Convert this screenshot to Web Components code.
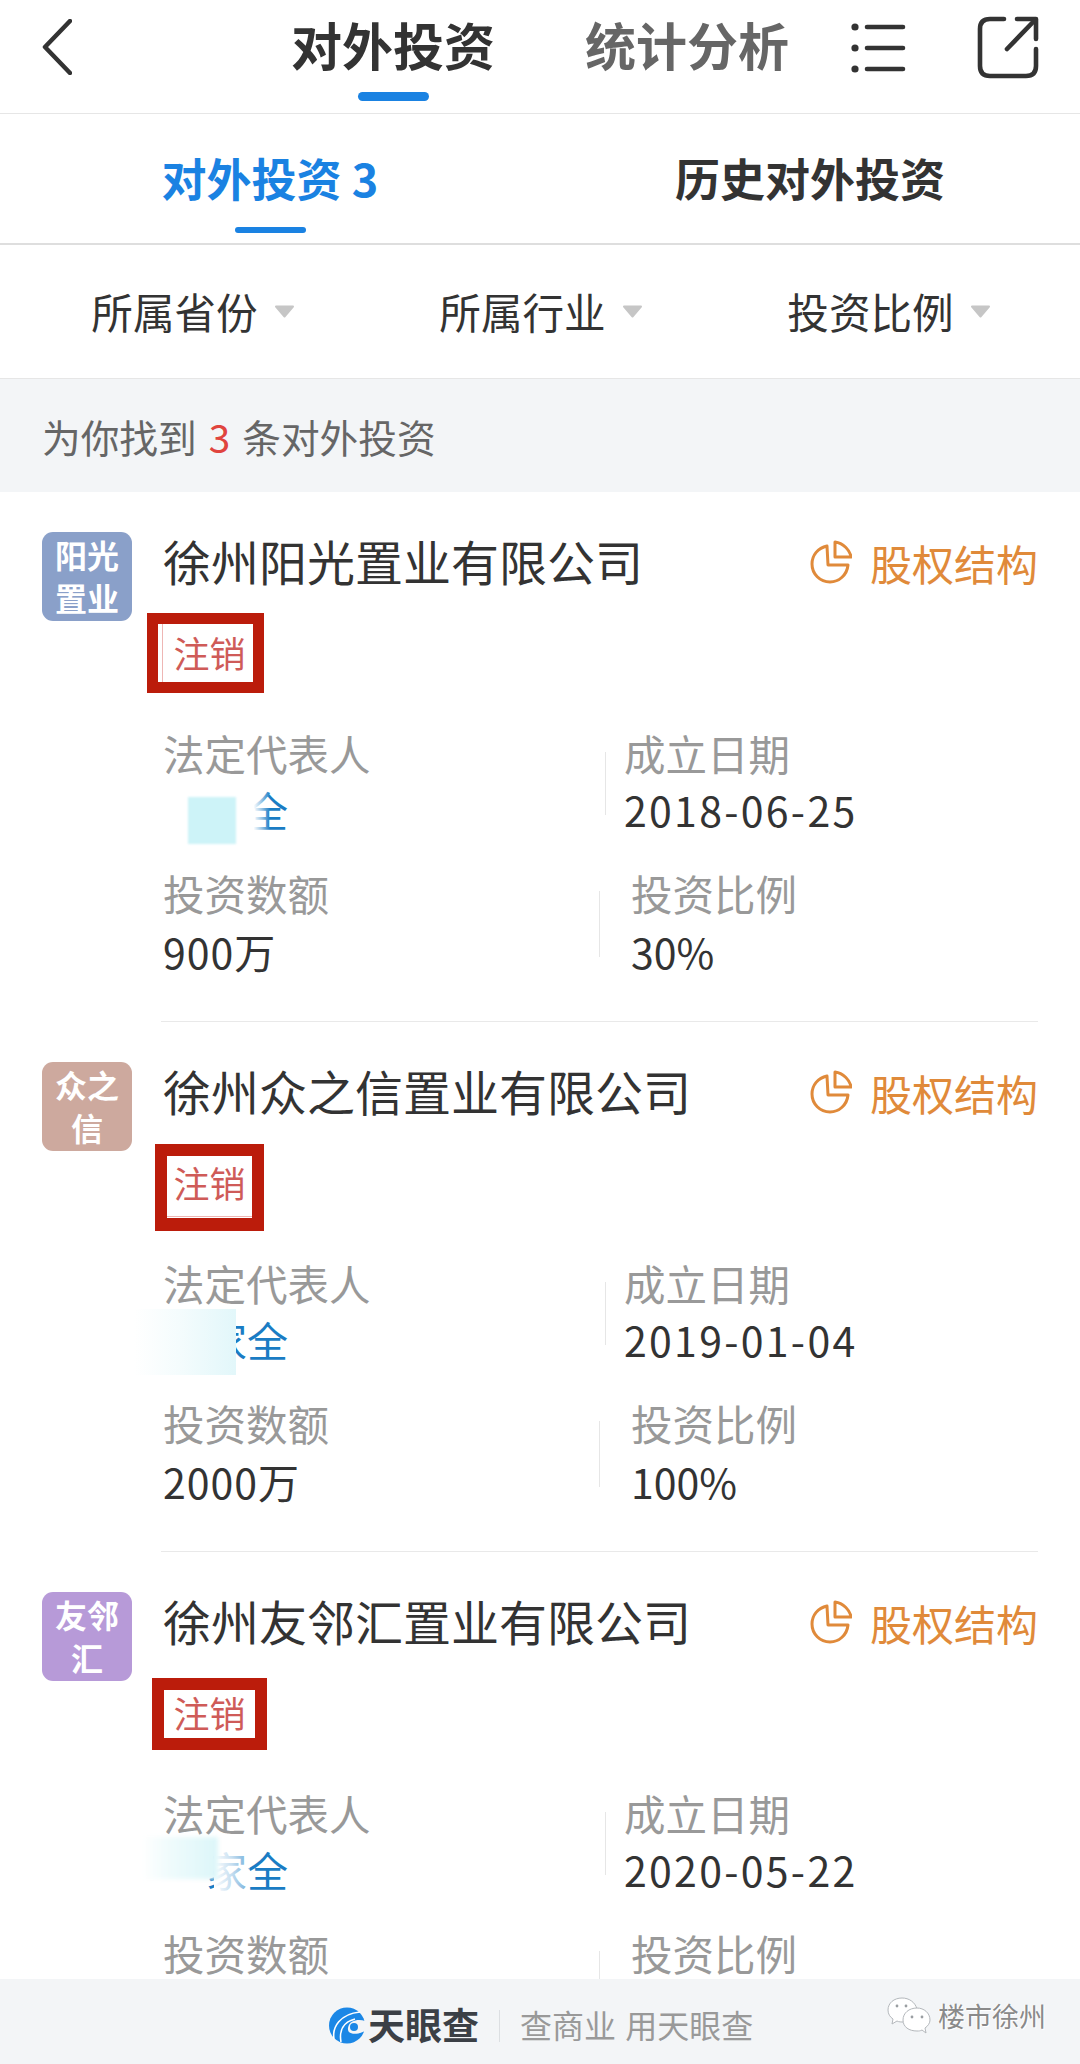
<!DOCTYPE html>
<html lang="zh">
<head>
<meta charset="utf-8">
<title>对外投资</title>
<style>
    html, body {
        margin: 0;
        padding: 0;
        background: #fff;
        font-family: "Noto Sans CJK SC", "Noto Sans", sans-serif;
        color: #333;
    }
    #page {
        width: 1080px;
        height: 2064px;
        overflow: hidden;
        display: flex;
        flex-direction: column;
    }
    #list {
        flex: 1;
        min-height: 0;
        overflow: hidden;
    }
</style>
</head>
<body>
<div id="page">
    <top-header></top-header>
    <sub-tabs></sub-tabs>
    <filter-bar></filter-bar>
    <result-count count="3"></result-count>
    <div id="list">
        <invest-card logo="阳光置业" color="#8aa0c9" name="徐州阳光置业有限公司" date="2018-06-25" amount="900万" ratio="30%" frame="-15,-8,117,80,11,11">
            <rep-name slot="rep" variant="a">全</rep-name>
        </invest-card>
        <invest-card logo="众之信" color="#cda99e" name="徐州众之信置业有限公司" date="2019-01-04" amount="2000万" ratio="100%" frame="-7,-7,109,87,12,13">
            <rep-name slot="rep" variant="b">家全</rep-name>
        </invest-card>
        <invest-card logo="友邻汇" color="#b79ad8" name="徐州友邻汇置业有限公司" date="2020-05-22" ratio="" frame="-10,-3,115,72,12,12">
            <rep-name slot="rep" variant="c">家全</rep-name>
        </invest-card>
    </div>
    <page-footer></page-footer>
</div>

<script>
class TopHeader extends HTMLElement {
    constructor() {
        super();
        this.shadowDOM = this.attachShadow({ mode: 'open' });
    }

    connectedCallback() {
        this.shadowDOM.innerHTML = `
        <style>
            :host {
                display: flex;
                height: 113px;
                border-bottom: 1px solid #e6e6e6;
                padding-left: 42px;
                background: #fff;
            }
            svg { display: block; flex: none; }
            .back { margin-top: 19px; }
            .tab {
                width: 200px;
                padding-top: 14px;
                display: flex;
                flex-direction: column;
                align-items: center;
                font-size: 51px;
                line-height: 60px;
                font-weight: 700;
                white-space: nowrap;
            }
            .tab.first { margin-left: 221px; color: #333; }
            .tab.second { margin-left: 94px; color: #666; }
            .tab i {
                width: 71px;
                height: 9px;
                margin-top: 18px;
                border-radius: 5px;
                background: #1a82e2;
            }
            .menu { margin-left: 63px; margin-top: 20px; }
            .share { margin-left: 71px; margin-top: 13px; }
        </style>
        <svg class="back" width="30" height="56" viewBox="0 0 30 56" fill="none">
            <path d="M28 2 L3 28 L28 54" stroke="#333" stroke-width="4.5" stroke-linecap="round" stroke-linejoin="round"/>
        </svg>
        <div class="tab first">对外投资<i></i></div>
        <div class="tab second">统计分析</div>
        <svg class="menu" width="56" height="56" viewBox="0 0 56 56" fill="none" stroke="#333">
            <circle cx="5" cy="7" r="3.6" fill="#333" stroke="none"/>
            <circle cx="5" cy="28" r="3.6" fill="#333" stroke="none"/>
            <circle cx="5" cy="49" r="3.6" fill="#333" stroke="none"/>
            <path d="M17 7H53M17 28H53M17 49H53" stroke-width="4.6" stroke-linecap="round"/>
        </svg>
        <svg class="share" width="64" height="68" viewBox="0 0 64 68" fill="none" stroke="#333" stroke-width="4.6" stroke-linecap="round" stroke-linejoin="round">
            <path d="M27 6H13Q3 6 3 16V53Q3 63 13 63H49Q59 63 59 53V36"/>
            <path d="M40 6H59V26"/>
            <path d="M30 36L58 7"/>
        </svg>
        `;
    }
}

class SubTabs extends HTMLElement {
    constructor() {
        super();
        this.shadowDOM = this.attachShadow({ mode: 'open' });
    }

    connectedCallback() {
        this.shadowDOM.innerHTML = `
        <style>
            :host {
                display: grid;
                grid-template-columns: 1fr 1fr;
                height: 129px;
                border-bottom: 2px solid #dedede;
                background: #fff;
            }
            .item {
                display: flex;
                flex-direction: column;
                align-items: center;
                padding-top: 36px;
                font-size: 45px;
                line-height: 56px;
                font-weight: 700;
                white-space: nowrap;
            }
            .on { color: #1a82e2; }
            .item i {
                width: 71px;
                height: 6px;
                margin-top: 21px;
                border-radius: 3px;
                background: #1a82e2;
            }
        </style>
        <div class="item on">对外投资 3<i></i></div>
        <div class="item">历史对外投资</div>
        `;
    }
}

class FilterBar extends HTMLElement {
    constructor() {
        super();
        this.shadowDOM = this.attachShadow({ mode: 'open' });
    }

    connectedCallback() {
        const filters = ['所属省份', '所属行业', '投资比例'];
        this.shadowDOM.innerHTML = `
        <style>
            :host {
                display: grid;
                grid-template-columns: repeat(3, 348px);
                padding-left: 19px;
                height: 133px;
                border-bottom: 1px solid #e6e6e6;
                background: #fff;
                box-sizing: content-box;
            }
            .filter {
                display: flex;
                align-items: center;
                justify-content: center;
                gap: 16px;
                font-size: 41.6px;
                color: #333;
            }
            .filter span { position: relative; top: -1px; }
        </style>
        ${filters.map(name => `
            <div class="filter"><span>${name}</span>
                <svg width="21" height="13" viewBox="0 0 21 13"><path d="M2 1.5H19L10.5 11.5Z" fill="#c6c6c6" stroke="#c6c6c6" stroke-width="2" stroke-linejoin="round"/></svg>
            </div>`).join('')}
        `;
    }
}

class ResultCount extends HTMLElement {
    constructor() {
        super();
        this.shadowDOM = this.attachShadow({ mode: 'open' });
    }

    connectedCallback() {
        this.shadowDOM.innerHTML = `
        <style>
            :host {
                display: flex;
                align-items: center;
                height: 113px;
                padding-left: 42px;
                background: #f3f5f7;
                font-size: 38.7px;
                color: #666;
                white-space: nowrap;
            }
            b { font-weight: 400; color: #e0443e; margin: 0 12px 0 12px; }
        </style>
        为你找到<b>${this.getAttribute('count')}</b>条对外投资
        `;
    }
}

class RepName extends HTMLElement {
    constructor() {
        super();
        this.shadowDOM = this.attachShadow({ mode: 'open' });
    }

    connectedCallback() {
        this.shadowDOM.innerHTML = `
        <style>
            :host {
                display: block;
                position: relative;
                height: 58px;
                font-size: 41px;
                line-height: 53px;
                color: #1a7cc4;
                text-align: right;
                width: 125px;
                white-space: nowrap;
            }
            .mask { position: absolute; display: block; }
            :host([variant="a"]) .mask {
                left: 25px; top: 14px; width: 48px; height: 47px;
                background: #cdf3f8;
                filter: blur(1px);
            }
            :host([variant="a"]) .fade {
                left: -30px; top: -6px; width: 137px; height: 70px;
                filter: none;
                background: linear-gradient(90deg, #fff 0, #fff 88%, rgba(255,255,255,.55) 94%, rgba(255,255,255,0) 100%);
            }
            :host([variant="b"]) .mask {
                left: -29px; top: -4px; width: 102px; height: 66px;
                background: linear-gradient(90deg, #fff 0, #f4fcfd 45%, #e2f7fa 100%);
            }
            :host([variant="c"]) .mask {
                left: -21px; top: -6px; width: 76px; height: 42px;
                background: linear-gradient(90deg, #fff 0, #eefbfc 40%, #dcf6f9 100%);
                filter: blur(2px);
            }
            :host([variant="c"]) .fade {
                left: 51px; top: -2px; width: 36px; height: 58px;
                filter: none;
                background: linear-gradient(90deg, #fff 0, rgba(255,255,255,.75) 50%, rgba(255,255,255,.35) 100%);
            }
        </style>
        <slot></slot><span class="mask fade"></span><span class="mask"></span>
        `;
    }
}

class InvestCard extends HTMLElement {
    constructor() {
        super();
        this.shadowDOM = this.attachShadow({ mode: 'open' });
    }

    connectedCallback() {
        const get = name => this.getAttribute(name) || '';
        const [left, top, width, height, side, bottom] = get('frame').split(',');
        this.shadowDOM.innerHTML = `
        <style>
            :host {
                display: grid;
                grid-template-columns: 90px 1fr;
                column-gap: 31px;
                padding: 40px 42px 0;
                background: #fff;
            }
            .logo {
                width: 90px;
                height: 89px;
                border-radius: 11px;
                color: #fff;
                font-size: 32px;
                line-height: 43px;
                font-weight: 700;
                text-align: center;
                padding: 1px 5px 0;
                box-sizing: border-box;
            }
            .body {
                margin-left: -2px;
                padding: 0 0 40px 2px;
                border-bottom: 1px solid #e9e9e9;
            }
            .title {
                display: flex;
                justify-content: space-between;
                align-items: center;
                height: 60px;
            }
            .name { font-size: 48px; line-height: 60px; color: #333; white-space: nowrap; margin-bottom: 4px; }
            .action {
                display: flex;
                align-items: center;
                gap: 18px;
                font-size: 42px;
                color: #e08a3a;
                white-space: nowrap;
                margin-top: 1px;
            }
            .action svg { display: block; margin-top: -2px; }
            .tag {
                position: relative;
                width: 98px;
                height: 66px;
                margin: 29px 0 40px -1px;
                box-sizing: border-box;
                border: 1px solid #eeb6b4;
                font-size: 36px;
                line-height: 60px;
                color: #cf5b58;
                text-align: center;
                padding-right: 3px;
            }
            .frame {
                position: absolute;
                left: ${left - 1}px;
                top: ${top - 1}px;
                width: ${width}px;
                height: ${height}px;
                box-sizing: border-box;
                border: ${side}px solid #bb1c0b;
                border-bottom-width: ${bottom}px;
            }
            .row { display: flex; }
            .row.one { margin-bottom: 26px; }
            .cell { display: flex; flex-direction: column; }
            .row.one .left { width: 442px; }
            .row.two .left { width: 436px; }
            .sep { width: 1px; background: #e6e6e6; flex: none; }
            .row.one .sep { height: 63px; margin: 25px 18px 0 0; }
            .row.two .sep { height: 66px; margin: 24px 31px 0 0; }
            .label { font-size: 41.5px; line-height: 52px; height: 56px; color: #999; white-space: nowrap; }
            .value { font-size: 41px; line-height: 53px; height: 58px; color: #333; white-space: nowrap; }
            .date { letter-spacing: 2.3px; }
            .row.two .value { line-height: 56px; }
            .amount { letter-spacing: 1px; }
        </style>
        <div class="logo" style="background:${get('color')}">${get('logo')}</div>
        <div class="body">
            <div class="title">
                <div class="name">${get('name')}</div>
                <div class="action">
                    <svg width="42" height="44" viewBox="0 0 42 44" fill="none" stroke="#e08a3a" stroke-width="3" stroke-linejoin="round" stroke-linecap="round">
                        <path d="M17 6C8 8 2 15 2 24C2 34 10 42 20 42C29 42 37 35 38 25H18Z"/>
                        <path d="M26 2C34 3 41 10 42 17H26Z" transform="translate(-1 0)"/>
                    </svg>
                    股权结构
                </div>
            </div>
            <div class="tag">注销<span class="frame"></span></div>
            <div class="row one">
                <div class="cell left">
                    <div class="label">法定代表人</div>
                    <slot name="rep"></slot>
                </div>
                <div class="sep"></div>
                <div class="cell">
                    <div class="label">成立日期</div>
                    <div class="value date">${get('date')}</div>
                </div>
            </div>
            <div class="row two">
                <div class="cell left">
                    <div class="label">投资数额</div>
                    <div class="value amount">${get('amount')}</div>
                </div>
                <div class="sep"></div>
                <div class="cell">
                    <div class="label">投资比例</div>
                    <div class="value">${get('ratio')}</div>
                </div>
            </div>
        </div>
        `;
    }
}

class PageFooter extends HTMLElement {
    constructor() {
        super();
        this.shadowDOM = this.attachShadow({ mode: 'open' });
    }

    connectedCallback() {
        this.shadowDOM.innerHTML = `
        <style>
            :host {
                display: flex;
                align-items: center;
                position: relative;
                flex: none;
                height: 85px;
                padding: 4px 0 0 329px;
                box-sizing: border-box;
                background: #f3f5f7;
            }
            .logo { margin-top: 4px; }
            .brand { font-size: 37px; font-weight: 700; color: #3b4046; margin-left: 3px; white-space: nowrap; }
            .sep { width: 1px; height: 32px; background: #dcdfe2; margin: 4px 20px 0; }
            .slogan { font-size: 32px; word-spacing: 2px; color: #999; white-space: nowrap; }
            .mark {
                position: absolute;
                left: 887px;
                top: 17px;
                display: flex;
                align-items: center;
                gap: 7px;
                font-size: 27px;
                color: #8a8a8a;
                text-shadow: 1px 1px 0 #fff, -1px 0 0 #fff;
                white-space: nowrap;
            }
        </style>
        <svg class="logo" width="36" height="37" viewBox="0 0 36 37">
            <circle cx="18" cy="18.5" r="18" fill="#1b87e6"/>
            <path d="M5 32C3 20 11 7 31 5" fill="none" stroke="#fff" stroke-width="1.6"/>
            <path d="M12 35C10 24 14 15 26 12" fill="none" stroke="#fff" stroke-width="1.6"/>
            <path d="M36 14C30 12 20 13 19 21C18 27 26 29 36 24Z" fill="#f3f5f7"/>
            <circle cx="25" cy="20" r="4" fill="#1b87e6"/>
        </svg>
        <div class="brand">天眼查</div>
        <div class="sep"></div>
        <div class="slogan">查商业 用天眼查</div>
        <div class="mark">
            <svg width="44" height="38" viewBox="0 0 44 38" fill="#fff" stroke="#b4b8bc" stroke-width="1">
                <path d="M15 1C7 1 1 6 1 13C1 17 3 20 6 22L5 27L10 24C12 25 14 25 17 25L30 12C28 5 22 1 15 1Z"/>
                <path d="M30 11C22 11 16 16 16 23C16 30 22 34 30 34C32 34 33 34 35 33L39 36L38 31C41 29 43 26 43 23C43 16 37 11 30 11Z"/>
                <circle cx="10" cy="9" r="1.4" fill="#9a9ea2" stroke="none"/>
                <circle cx="19" cy="9" r="1.4" fill="#9a9ea2" stroke="none"/>
                <circle cx="25" cy="20" r="1.4" fill="#9a9ea2" stroke="none"/>
                <circle cx="35" cy="20" r="1.4" fill="#9a9ea2" stroke="none"/>
            </svg>
            楼市徐州
        </div>
        `;
    }
}

customElements.define('top-header', TopHeader);
customElements.define('sub-tabs', SubTabs);
customElements.define('filter-bar', FilterBar);
customElements.define('result-count', ResultCount);
customElements.define('rep-name', RepName);
customElements.define('invest-card', InvestCard);
customElements.define('page-footer', PageFooter);
</script>
</body>
</html>
